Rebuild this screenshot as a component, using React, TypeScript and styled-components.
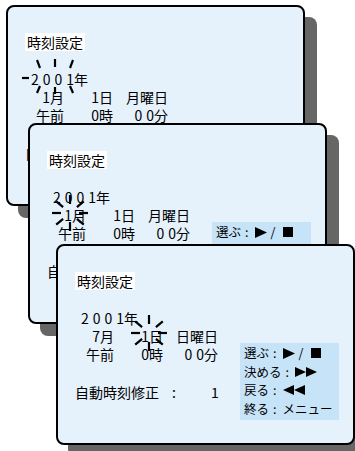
import React from 'react';
import styled, { createGlobalStyle } from 'styled-components';

const GlobalStyle = createGlobalStyle`
  html, body {
    margin: 0;
    padding: 0;
    background: #ffffff;
  }
  body {
    width: 355px;
    height: 451px;
    overflow: hidden;
    font-family: "Noto Sans CJK JP", "Noto Sans", sans-serif;
    color: #000;
  }
`;

const Desk = styled.div`
  position: relative;
  width: 355px;
  height: 451px;
  overflow: hidden;
`;

// the three screens are stacked on top of each other like windows
const Screen = styled.div<{ $x: number; $y: number }>`
  position: absolute;
  left: ${(p) => p.$x}px;
  top: ${(p) => p.$y}px;
  width: 299px;
  height: 201px;
  box-sizing: border-box;
  border: 2px solid #000;
  border-radius: 8px;
  background: #e5f1fb;
  box-shadow: 12px 12px 0 #666666;
  padding: 26px 0 0 17px;
  display: flex;
  align-items: flex-start;
`;

const Main = styled.div`
  width: 165px;
  flex-shrink: 0;
  font-size: 14px;
  line-height: 18px;
`;

const Title = styled.div`
  display: inline-block;
  width: 60px;
  box-sizing: border-box;
  padding-left: 2px;
  background: #ffffff;
  font-size: 14px;
  line-height: 18px;
`;

const Year = styled.div`
  margin-top: 19px;
  padding-left: 6px;
  white-space: pre;
`;

const Spaced = styled.span`
  letter-spacing: 4px;
`;

const DateGrid = styled.div`
  display: grid;
  grid-template-columns: 39px 49px 55px;
  justify-items: end;
  white-space: pre;
`;

const AutoRow = styled.div`
  margin-top: 20px;
  display: grid;
  grid-template-columns: 97px 39px auto;
`;

const Menu = styled.div`
  margin-top: 71px;
  width: 99px;
  height: 77px;
  box-sizing: border-box;
  padding: 1px 0 0 4px;
  background: #c6e3f8;
  font-size: 12.5px;
  line-height: 18.5px;
`;

const MenuLine = styled.div`
  display: flex;
  align-items: center;
  white-space: pre;
`;

const Colon = styled.span`
  margin: 0 6px 0 4px;
`;

const Slash = styled.span`
  margin: 0 8px 0 4px;
`;

const Sym = styled.svg`
  display: block;
`;

const SparkleSvg = styled.svg<{ $x: number; $y: number }>`
  position: absolute;
  left: ${(p) => p.$x}px;
  top: ${(p) => p.$y}px;
  overflow: visible;
  pointer-events: none;
`;

type Ray = [number, number, number, number];

const radial = (): Ray[] =>
  [0, 40, 90, 140, 180, 220, 270, 320].map((a) => {
    const r = (a * Math.PI) / 180;
    return [Math.cos(r) * 9, -Math.sin(r) * 9, Math.cos(r) * 18, -Math.sin(r) * 18];
  });

const yearRays: Ray[] = [
  [-33, 1, -26, 1],
  [-18, -17, -15, -9],
  [0, -18, 0, -10],
  [18, -17, 15, -9],
  [-18, 16, -15, 9],
  [0, 10, 0, 17],
  [15, 9, 18, 16],
];

const Sparkle: React.FC<{ cx: number; cy: number; rays: Ray[] }> = ({ cx, cy, rays }) => (
  <SparkleSvg $x={cx - 36} $y={cy - 20} width={72} height={40} viewBox="-36 -20 72 40">
    {rays.map(([x1, y1, x2, y2], i) => (
      <line key={i} x1={x1} y1={y1} x2={x2} y2={y2} stroke="#000" strokeWidth={2.2} />
    ))}
  </SparkleSvg>
);

const Play = () => (
  <Sym width={12} height={11} viewBox="0 0 12 11">
    <polygon points="0,0 12,5.5 0,11" fill="#000" />
  </Sym>
);

const Stop = () => (
  <Sym width={10} height={10} viewBox="0 0 10 10">
    <rect width={10} height={10} fill="#000" />
  </Sym>
);

const Forward = () => (
  <Sym width={22} height={10} viewBox="0 0 22 10">
    <polygon points="0,0 11,5 0,10" fill="#000" />
    <polygon points="11,0 22,5 11,10" fill="#000" />
  </Sym>
);

const Rewind = () => (
  <Sym width={22} height={10} viewBox="0 0 22 10">
    <polygon points="11,0 0,5 11,10" fill="#000" />
    <polygon points="22,0 11,5 22,10" fill="#000" />
  </Sym>
);

interface ScreenData {
  x: number;
  y: number;
  month: string;
  weekday: string;
  menu: boolean;
  sparkle: { cx: number; cy: number; rays: Ray[] };
}

const screens: ScreenData[] = [
  { x: 6, y: 5, month: '1', weekday: '月曜日', menu: false, sparkle: { cx: 47, cy: 70, rays: yearRays } },
  { x: 28, y: 123, month: '1', weekday: '月曜日', menu: true, sparkle: { cx: 40, cy: 88, rays: radial() } },
  { x: 56, y: 244, month: '7', weekday: '日曜日', menu: true, sparkle: { cx: 91, cy: 87, rays: radial() } },
];

const ClockScreen: React.FC<{ data: ScreenData }> = ({ data }) => (
  <Screen $x={data.x} $y={data.y}>
    <Main>
      <Title>時刻設定</Title>
      <Year>
        <Spaced>200</Spaced>1年
      </Year>
      <DateGrid>
        <span>{data.month}月</span>
        <span>1日</span>
        <span>{data.weekday}</span>
        <span>午前</span>
        <span>0時</span>
        <span>
          <Spaced>0</Spaced>0分
        </span>
      </DateGrid>
      <AutoRow>
        <span>自動時刻修正</span>
        <span>:</span>
        <span>1</span>
      </AutoRow>
    </Main>
    {data.menu && (
      <Menu>
        <MenuLine>
          選ぶ<Colon>:</Colon>
          <Play />
          <Slash>/</Slash>
          <Stop />
        </MenuLine>
        <MenuLine>
          決める<Colon>:</Colon>
          <Forward />
        </MenuLine>
        <MenuLine>
          戻る<Colon>:</Colon>
          <Rewind />
        </MenuLine>
        <MenuLine>
          終る<Colon>:</Colon>メニュー
        </MenuLine>
      </Menu>
    )}
    <Sparkle cx={data.sparkle.cx} cy={data.sparkle.cy} rays={data.sparkle.rays} />
  </Screen>
);

export default function App() {
  return (
    <>
      <GlobalStyle />
      <Desk>
        {screens.map((s, i) => (
          <ClockScreen key={i} data={s} />
        ))}
      </Desk>
    </>
  );
}
